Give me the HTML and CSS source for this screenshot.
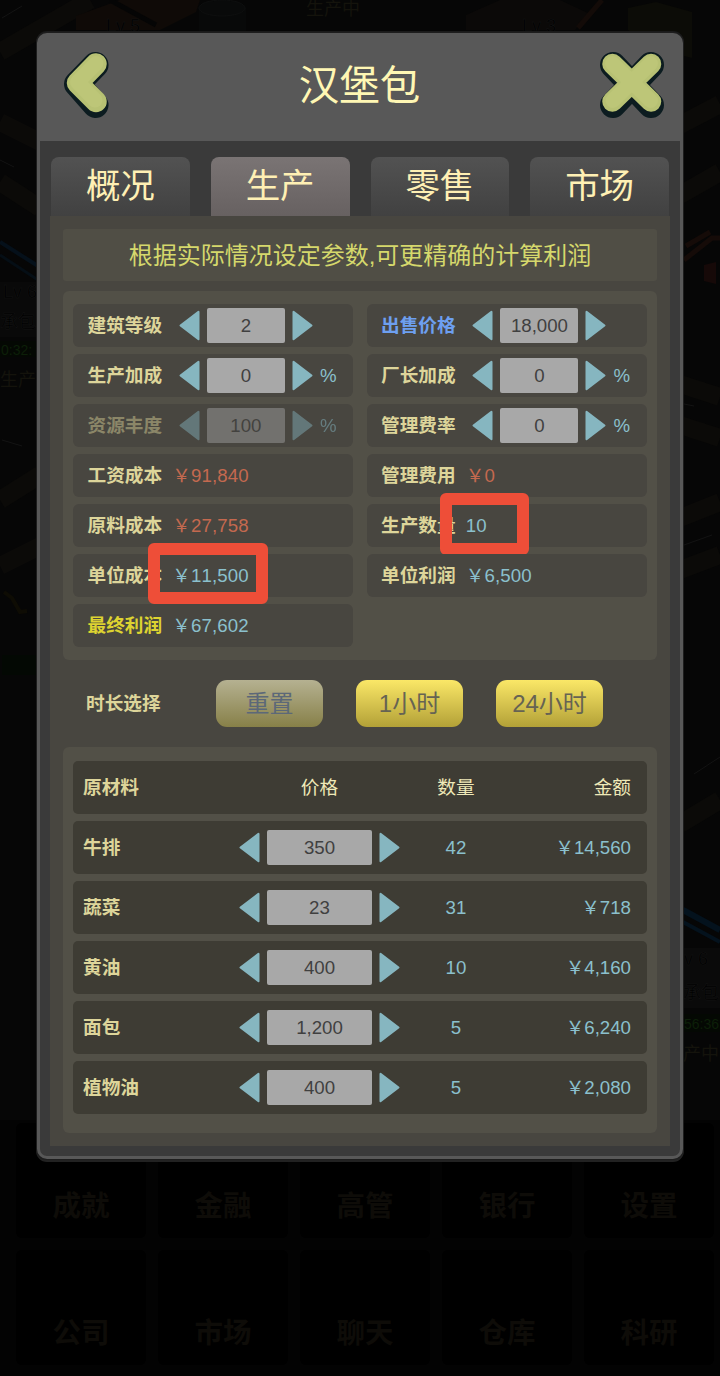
FILE: index.html
```html
<!DOCTYPE html>
<html lang="zh-CN">
<head>
    <meta charset="UTF-8">
    <meta name="viewport" content="width=device-width, initial-scale=1.0">
    <title>汉堡包 - 生产</title>
    <link rel="stylesheet" href="styles.css">
</head>
<body>
    <!-- shared shapes -->
    <svg class="defs" width="0" height="0">
        <symbol id="arrow-left" viewBox="0 0 21 31">
            <path d="M1.5 15.5 L19.5 1.8 V29.2 Z" fill="#86b6c0" stroke="#86b6c0" stroke-width="2" stroke-linejoin="round"/>
        </symbol>
        <symbol id="arrow-right" viewBox="0 0 21 31">
            <path d="M19.5 15.5 L1.5 1.8 V29.2 Z" fill="#86b6c0" stroke="#86b6c0" stroke-width="2" stroke-linejoin="round"/>
        </symbol>
    </svg>

    <!-- dimmed city map -->
    <div class="backdrop">
        <svg class="map" viewBox="0 0 720 1376" width="720" height="1376">
            <rect width="720" height="1120" fill="#060606"/>
            <g stroke="#0b0a08" stroke-width="18" fill="none">
                <path d="M0 52 L90 0"/>
                <path d="M0 122 L40 142"/>
                <path d="M0 182 L40 208"/>
                <path d="M0 500 L40 475"/>
                <path d="M0 566 L40 546"/>
                <path d="M680 384 L720 397"/>
                <path d="M680 425 L720 438"/>
                <path d="M680 518 L720 502"/>
                <path d="M680 570 L720 555"/>
                <path d="M680 824 L720 800"/>
                <path d="M680 125 L720 104"/>
                <path d="M680 195 L720 172"/>
            </g>
            <g stroke="#131313" stroke-width="1" fill="none">
                <path d="M2 18 L22 6"/>
                <path d="M0 160 L14 167"/>
                <path d="M2 440 L22 446"/>
                <path d="M684 404 L694 406"/>
                <path d="M684 545 L712 535"/>
                <path d="M694 774 L720 757"/>
            </g>
            <path d="M76 16 L120 0 H200 L196 12 L160 30 H76 Z" fill="#0f0a07"/>
            <path d="M110 0 L156 25" stroke="#050505" stroke-width="5"/>
            <path d="M199 8 V33 H246 V8 Z" fill="#080909"/>
            <ellipse cx="222" cy="8" rx="23" ry="8" fill="#090a0a" stroke="#0e0f0f"/>
            <path d="M466 15 L500 0 H560 L590 14 L575 30 H466 Z" fill="#0b0908"/>
            <path d="M578 28 L602 0" stroke="#130b08" stroke-width="5"/>
            <path d="M628 8 L656 2 L692 12 V58 L660 50 L628 30 Z" fill="#0c0c07"/>
            <path d="M0 242 L38 266" stroke="#05101a" stroke-width="4"/>
            <path d="M0 255 L38 280" stroke="#050e15" stroke-width="3"/>
            <path d="M684 260 L712 238 H720 M686 246 L710 232" stroke="#150b08" stroke-width="5" fill="none"/>
            <path d="M704 265 L716 262 V284 L704 281 Z" fill="#160908"/>
            <path d="M683 910 L720 930" stroke="#04121d" stroke-width="6"/>
            <path d="M683 922 L720 942" stroke="#04121d" stroke-width="4"/>
            <rect x="0" y="282" width="37" height="55" fill="#090909"/>
            <rect x="683" y="948" width="37" height="60" fill="#0a0a0a"/>
            <rect x="0" y="341" width="37" height="16" fill="#040803"/>
            <rect x="2" y="655" width="35" height="20" fill="#030803"/>
            <rect x="683" y="1014" width="37" height="18" fill="#040803"/>
            <path d="M4 592 L12 598 L20 612 L27 611" stroke="#0e0c04" stroke-width="4" fill="none"/>
            <g font-size="18" fill="#000" stroke="#141414" stroke-width=".5">
                <text x="106" y="32">Lv 5</text>
                <text x="522" y="32">Lv 3</text>
                <text x="3" y="298">Lv 6</text>
                <text x="0" y="328">承包</text>
                <text x="684" y="965">v 6</text>
                <text x="683" y="999">承包</text>
            </g>
            <g font-size="18" fill="#14130c">
                <text x="306" y="15">生产中</text>
                <text x="0" y="386">生产</text>
                <text x="683" y="1060">产中</text>
            </g>
            <g font-size="14" fill="#0c1f08">
                <text x="1" y="355">0:32:</text>
                <text x="684" y="1029">56:36</text>
            </g>
        </svg>
        <div class="menu">
            <div class="menu-item">成就</div>
            <div class="menu-item">金融</div>
            <div class="menu-item">高管</div>
            <div class="menu-item">银行</div>
            <div class="menu-item">设置</div>
            <div class="menu-item">公司</div>
            <div class="menu-item">市场</div>
            <div class="menu-item">聊天</div>
            <div class="menu-item">仓库</div>
            <div class="menu-item">科研</div>
        </div>
    </div>

    <div class="dialog">
        <div class="header">
            <svg class="icon" viewBox="0 0 54 72" width="54" height="72">
                <path d="M35.5 14 L17 33 L35.5 54" fill="none" stroke="#0c1c20" stroke-width="26" stroke-linecap="round" stroke-linejoin="round"/>
                <path d="M36 13 L17.5 32 L36 50.5" fill="none" stroke="#b7c173" stroke-width="21.5" stroke-linecap="round" stroke-linejoin="round"/>
                <path d="M36 12.5 L17.5 31 L35 49" fill="none" stroke="#bdc678" stroke-width="15" stroke-linecap="round" stroke-linejoin="round"/>
            </svg>
            <h1>汉堡包</h1>
            <svg class="icon" viewBox="0 0 70 72" width="70" height="72">
                <path d="M16 14 L54 54 M54 14 L16 54" stroke="#0c1c20" stroke-width="26" stroke-linecap="round"/>
                <path d="M15.5 13 L54 50.5 M54 13 L15.5 50.5" stroke="#b7c173" stroke-width="20.5" stroke-linecap="round"/>
                <path d="M15.5 12.5 L53.5 49.5 M53.5 12.5 L16 49.5" stroke="#bdc678" stroke-width="15" stroke-linecap="round"/>
            </svg>
        </div>

        <div class="tabs">
            <div class="tab">概况</div>
            <div class="tab active">生产</div>
            <div class="tab">零售</div>
            <div class="tab">市场</div>
        </div>

        <div class="content">
            <div class="tip">根据实际情况设定参数,可更精确的计算利润</div>

            <div class="params">
                <div class="param">
                    <b>建筑等级</b>
                    <div class="stepper"><svg><use href="#arrow-left"/></svg><span class="input">2</span><svg><use href="#arrow-right"/></svg></div>
                </div>
                <div class="param">
                    <b class="blue">出售价格</b>
                    <div class="stepper"><svg><use href="#arrow-left"/></svg><span class="input">18,000</span><svg><use href="#arrow-right"/></svg></div>
                </div>
                <div class="param">
                    <b>生产加成</b>
                    <div class="stepper"><svg><use href="#arrow-left"/></svg><span class="input">0</span><svg><use href="#arrow-right"/></svg>%</div>
                </div>
                <div class="param">
                    <b>厂长加成</b>
                    <div class="stepper"><svg><use href="#arrow-left"/></svg><span class="input">0</span><svg><use href="#arrow-right"/></svg>%</div>
                </div>
                <div class="param disabled">
                    <b>资源丰度</b>
                    <div class="stepper"><svg><use href="#arrow-left"/></svg><span class="input">100</span><svg><use href="#arrow-right"/></svg>%</div>
                </div>
                <div class="param">
                    <b>管理费率</b>
                    <div class="stepper"><svg><use href="#arrow-left"/></svg><span class="input">0</span><svg><use href="#arrow-right"/></svg>%</div>
                </div>
                <div class="param"><b>工资成本</b><span class="value cost">￥91,840</span></div>
                <div class="param"><b>管理费用</b><span class="value cost">￥0</span></div>
                <div class="param"><b>原料成本</b><span class="value cost">￥27,758</span></div>
                <div class="param"><b>生产数量</b><span class="value">10</span><i class="mark mark-count"></i></div>
                <div class="param"><b>单位成本</b><span class="value">￥11,500</span><i class="mark mark-cost"></i></div>
                <div class="param"><b>单位利润</b><span class="value">￥6,500</span></div>
                <div class="param"><b class="yellow">最终利润</b><span class="value">￥67,602</span></div>
            </div>

            <div class="duration">
                <b>时长选择</b>
                <button class="btn btn-reset">重置</button>
                <button class="btn">1小时</button>
                <button class="btn">24小时</button>
            </div>

            <div class="materials">
                <div class="row head">
                    <b>原材料</b>
                    <span class="price">价格</span>
                    <span class="qty">数量</span>
                    <span class="amount">金额</span>
                </div>
                <div class="row">
                    <b>牛排</b>
                    <div class="stepper"><svg><use href="#arrow-left"/></svg><span class="input">350</span><svg><use href="#arrow-right"/></svg></div>
                    <span class="qty">42</span>
                    <span class="amount">￥14,560</span>
                </div>
                <div class="row">
                    <b>蔬菜</b>
                    <div class="stepper"><svg><use href="#arrow-left"/></svg><span class="input">23</span><svg><use href="#arrow-right"/></svg></div>
                    <span class="qty">31</span>
                    <span class="amount">￥718</span>
                </div>
                <div class="row">
                    <b>黄油</b>
                    <div class="stepper"><svg><use href="#arrow-left"/></svg><span class="input">400</span><svg><use href="#arrow-right"/></svg></div>
                    <span class="qty">10</span>
                    <span class="amount">￥4,160</span>
                </div>
                <div class="row">
                    <b>面包</b>
                    <div class="stepper"><svg><use href="#arrow-left"/></svg><span class="input">1,200</span><svg><use href="#arrow-right"/></svg></div>
                    <span class="qty">5</span>
                    <span class="amount">￥6,240</span>
                </div>
                <div class="row">
                    <b>植物油</b>
                    <div class="stepper"><svg><use href="#arrow-left"/></svg><span class="input">400</span><svg><use href="#arrow-right"/></svg></div>
                    <span class="qty">5</span>
                    <span class="amount">￥2,080</span>
                </div>
            </div>
        </div>
    </div>
</body>
</html>
```
FILE: styles.css
```css
* {
    box-sizing: border-box;
}

body {
    position: relative;
    width: 720px;
    height: 1376px;
    margin: 0;
    padding: 33px 37px 0;
    overflow: hidden;
    background: #020202;
    font-family: "Liberation Sans", "Noto Sans CJK SC", sans-serif;
    font-size: 18.67px;
    font-kerning: none;
    line-height: 28px;
    color: #8bc0cd;
}

.defs {
    position: absolute;
}

/* map and main menu behind the dialog */
.backdrop {
    position: absolute;
    inset: 0;
    display: flex;
    flex-direction: column;
    justify-content: flex-end;
}

.map {
    position: absolute;
    inset: 0;
}

.menu {
    position: relative;
    display: grid;
    grid-template-columns: repeat(5, 130px);
    grid-auto-rows: 115px;
    gap: 12px;
    height: 256px;
    padding: 3px 0 0 16px;
    background: #030303;
}

.menu-item {
    display: flex;
    align-items: flex-end;
    justify-content: center;
    padding-bottom: 11px;
    border-radius: 6px;
    background: #000;
    color: #0e0c08;
    font-size: 28.5px;
    font-weight: bold;
    line-height: 42px;
}

.dialog {
    position: relative;
    width: 646px;
    height: 1126px;
    border: 3px solid #585858;
    border-radius: 10px;
    background: #3a3a3a;
    box-shadow: 0 0 0 1px #1e1e1e, 0 -1px 0 1px #1a1a1a, 0 2px 0 1px #222;
}

.header {
    display: flex;
    align-items: center;
    justify-content: space-between;
    height: 105px;
    padding: 0 13px 0 20px;
    background: #585858;
}

.header h1 {
    margin: 0 0 5px 8px;
    color: #fff7b4;
    font-size: 40.5px;
    font-weight: normal;
    line-height: 60px;
}

.icon {
    margin-bottom: 3px;
}

.tabs {
    display: flex;
    gap: 21px;
    padding: 16px 11px 0;
}

.tab {
    width: 139px;
    height: 59px;
    border-radius: 8px 8px 0 0;
    background: linear-gradient(#525252, #414141);
    color: #fff0b4;
    font-size: 34.5px;
    line-height: 58px;
    text-align: center;
}

.tab.active {
    background: linear-gradient(#7a7474, #676161);
}

.content {
    height: 930px;
    margin: 0 10px;
    padding: 13px;
    background: #484640;
}

.tip {
    height: 52px;
    margin-bottom: 10px;
    border-radius: 3px;
    background: #504e45;
    color: #d5d86c;
    font-size: 24px;
    line-height: 53px;
    text-align: center;
}

.params {
    display: grid;
    grid-template-columns: 280px 280px;
    grid-auto-rows: 43px;
    gap: 7px 14px;
    padding: 13px 10px;
    border-radius: 6px;
    background: #525047;
}

.param {
    position: relative;
    display: flex;
    align-items: center;
    padding-left: 14.5px;
    border-radius: 6px;
    background: #484640;
}

.param:nth-child(even) {
    padding-left: 14px;
}

b {
    color: #ddd59a;
}

.blue {
    color: #6d9ff0;
}

.yellow {
    color: #ddd331;
}

.value {
    margin-left: 10px;
    letter-spacing: 0.15px;
}

.cost {
    color: #c4694f;
}

.disabled > * {
    opacity: 0.45;
}

.stepper {
    display: flex;
    align-items: center;
    gap: 7px;
    margin-left: 16.8px;
}

.stepper svg {
    width: 21px;
    height: 31px;
}

.input {
    width: 78px;
    height: 35px;
    border-radius: 2px;
    background: #a8a8a8;
    color: #404040;
    line-height: 36px;
    text-align: center;
}

/* red frames drawn over the values */
.mark {
    position: absolute;
    border: 12px solid #ee4e38;
    border-radius: 6px;
}

.mark-count {
    left: 73px;
    top: -11px;
    width: 89px;
    height: 62px;
}

.mark-cost {
    left: 75px;
    top: -11px;
    width: 120px;
    height: 61px;
}

.duration {
    display: flex;
    align-items: center;
    gap: 33px;
    height: 87px;
    padding-left: 23px;
}

.duration b {
    width: 97px;
}

.btn {
    width: 107px;
    height: 47px;
    padding: 0;
    border: none;
    border-radius: 11px;
    background: linear-gradient(#fae767, #b3a137);
    color: #666353;
    font-family: inherit;
    font-size: 24px;
    line-height: 47px;
}

.btn-reset {
    background: linear-gradient(#b5b191, #878048);
    color: #5c6878;
}

.materials {
    display: flex;
    flex-direction: column;
    gap: 7px;
    padding: 14px 10px 19px;
    border-radius: 6px;
    background: #525047;
}

.row {
    display: grid;
    grid-template-columns: 156px 161px 112px 1fr;
    align-items: center;
    height: 53px;
    padding: 0 16px 0 10px;
    border-radius: 5px;
    background: #3e3c34;
}

.row .stepper {
    margin: 0;
}

.row .input {
    width: 105px;
}

.price,
.qty {
    text-align: center;
}

.amount {
    text-align: right;
}

.head span {
    color: #efe9b8;
}
```
